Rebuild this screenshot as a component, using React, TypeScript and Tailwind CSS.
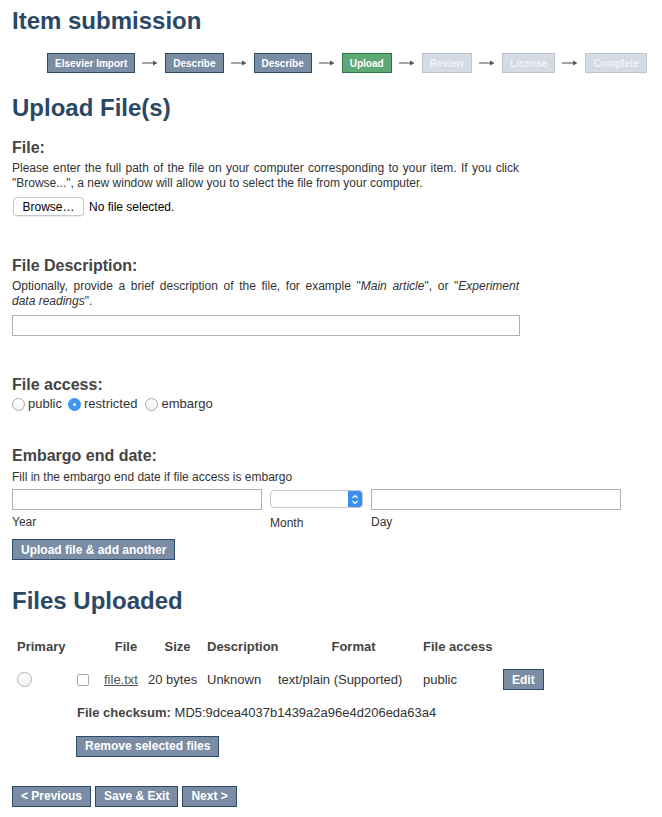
import type { ReactNode } from 'react';

const STEPS: { label: string; state: 'done' | 'current' | 'todo' }[] = [
  { label: 'Elsevier Import', state: 'done' },
  { label: 'Describe', state: 'done' },
  { label: 'Describe', state: 'done' },
  { label: 'Upload', state: 'current' },
  { label: 'Review', state: 'todo' },
  { label: 'License', state: 'todo' },
  { label: 'Complete', state: 'todo' },
];

const stepCls = {
  done: 'border-[#2d4a69] bg-[#7b8da4] text-white',
  current: 'border-[#2b7446] bg-[#5ea878] text-white',
  todo: 'border-[#bcc5d0] bg-[#d5dbe3] text-[#eef1f5]',
};

const btn =
  'border border-[#2d4a69] bg-[#7b8da4] px-[8px] h-[21px] text-[12px] font-bold text-white leading-none whitespace-nowrap';

function Arrow() {
  return (
    <svg width="16" height="8" viewBox="0 0 16 8" className="mx-[7px] shrink-0">
      <path d="M0 4 H12" stroke="#666" strokeWidth="1.2" />
      <path d="M11 1.5 L15.5 4 L11 6.5 Z" fill="#555" />
    </svg>
  );
}

function Radio({ checked }: { checked?: boolean }) {
  if (checked)
    return (
      <span className="inline-flex h-[13px] w-[13px] items-center justify-center rounded-full bg-[#3c97f5]">
        <span className="h-[3px] w-[3px] rounded-full bg-white" />
      </span>
    );
  return (
    <span className="inline-block h-[13px] w-[13px] rounded-full border border-[#a9a9a9] bg-gradient-to-b from-white to-[#f3f3f3]" />
  );
}

function Heading({ children }: { children: ReactNode }) {
  return <h2 className="text-[16px] font-bold leading-[20px] text-[#444]">{children}</h2>;
}

function Help({ children }: { children: ReactNode }) {
  return (
    <p className="w-[507px] text-justify text-[12px] leading-[15px] text-[#333]">{children}</p>
  );
}

export default function App() {
  return (
    <div
      className="min-h-[817px] bg-white px-3 pt-[7px] text-[#333]"
      style={{ fontFamily: '"Liberation Sans", Arial, sans-serif' }}
    >
      <h1 className="text-[24px] font-bold leading-[28px] text-[#2a4866]">Item submission</h1>

      <div className="mt-[18px] flex items-center whitespace-nowrap pl-[35px]">
        {STEPS.map((s, i) => (
          <div key={i} className="flex shrink-0 items-center">
            {i > 0 && <Arrow />}
            <span
              className={`flex h-[20px] items-center border px-[7px] text-[10px] font-bold ${stepCls[s.state]}`}
            >
              {s.label}
            </span>
          </div>
        ))}
      </div>

      <h1 className="mt-[21px] text-[24px] font-bold leading-[28px] text-[#2a4866]">
        Upload File(s)
      </h1>

      <div className="mt-[16px]">
        <Heading>File:</Heading>
        <div className="mt-[3px]">
          <Help>
            Please enter the full path of the file on your computer corresponding to your item. If you
            click "Browse...", a new window will allow you to select the file from your computer.
          </Help>
        </div>
        <div className="mt-[6px] flex items-center gap-[5px] pl-px">
          <span className="flex h-[19px] w-[71px] items-center justify-center rounded-[4px] border border-[#c8c8c8] bg-white text-[12px] text-black shadow-[0_1px_1px_rgba(0,0,0,0.08)]">
            Browse…
          </span>
          <span className="text-[12px] text-black">No file selected.</span>
        </div>
      </div>

      <div className="mt-[40px]">
        <Heading>File Description:</Heading>
        <div className="mt-[3px]">
          <Help>
            Optionally, provide a brief description of the file, for example "<i>Main article</i>", or
            "<i>Experiment</i> <i className="whitespace-nowrap">data readings</i>".
          </Help>
        </div>
        <div className="mt-[6px] h-[21px] w-[508px] border border-[#b0b0b0] bg-white" />
      </div>

      <div className="mt-[39px]">
        <Heading>File access:</Heading>
        <div className="flex items-center text-[13px] leading-[18px] text-[#333]">
          <Radio />
          <span className="ml-[3px]">public</span>
          <span className="ml-[6px]" />
          <Radio checked />
          <span className="ml-[3px]">restricted</span>
          <span className="ml-[8px]" />
          <Radio />
          <span className="ml-[3px]">embargo</span>
        </div>
      </div>

      <div className="mt-[33px]">
        <Heading>Embargo end date:</Heading>
        <p className="mt-[4px] text-[12px] leading-[15px]">
          Fill in the embargo end date if file access is embargo
        </p>
        <div className="mt-[4px] flex items-start gap-[8px]">
          <div className="flex flex-col">
            <div className="h-[21px] w-[250px] border border-[#b0b0b0] bg-white" />
            <span className="mt-[3px] text-[12px]">Year</span>
          </div>
          <div className="flex flex-col">
            <div className="mt-px flex h-[18px] w-[93px] overflow-hidden rounded-[4px] border border-[#c8c8c8] bg-white">
              <div className="flex-1" />
              <div className="flex w-[14px] items-center justify-center bg-[#3c8ff2]">
                <svg width="8" height="11" viewBox="0 0 8 11" fill="none" stroke="white" strokeWidth="1.2">
                  <path d="M1.5 4 L4 1.5 L6.5 4" />
                  <path d="M1.5 7 L4 9.5 L6.5 7" />
                </svg>
              </div>
            </div>
            <span className="mt-[6px] text-[12px]">Month</span>
          </div>
          <div className="flex flex-col">
            <div className="h-[21px] w-[250px] border border-[#b0b0b0] bg-white" />
            <span className="mt-[3px] text-[12px]">Day</span>
          </div>
        </div>
        <button className={`${btn} mt-[7px]`}>Upload file &amp; add another</button>
      </div>

      <h1 className="mt-[26px] text-[24px] font-bold leading-[28px] text-[#2a4866]">
        Files Uploaded
      </h1>

      <div className="ml-[5px] mt-[22px] grid grid-cols-[60px_27px_44px_59px_71px_145px_80px_auto] items-center text-[13px] text-[#333]">
        <span className="font-bold text-[#444]">Primary</span>
        <span />
        <span className="text-center font-bold text-[#444]">File</span>
        <span className="text-center font-bold text-[#444]">Size</span>
        <span className="font-bold text-[#444]">Description</span>
        <span className="pl-[6px] text-center font-bold text-[#444]">Format</span>
        <span className="font-bold text-[#444]">File access</span>
        <span />

        <div className="mt-[13px] flex">
          <span className="h-[15px] w-[15px] rounded-full border border-[#b0b0b0] bg-gradient-to-b from-white to-[#f3f3f3]" />
        </div>
        <div className="mt-[13px] flex">
          <span className="h-[12px] w-[12px] rounded-[2px] border border-[#a9a9a9] bg-white" />
        </div>
        <a className="mt-[13px] text-[#555] underline">file.txt</a>
        <span className="mt-[13px]">20 bytes</span>
        <span className="mt-[13px]">Unknown</span>
        <span className="mt-[13px]">text/plain (Supported)</span>
        <span className="mt-[13px]">public</span>
        <div className="mt-[13px]">
          <button className={btn}>Edit</button>
        </div>

        <div className="col-start-2 col-span-7 mt-[13px]">
          <b className="text-[#444]">File checksum:</b> MD5:9dcea4037b1439a2a96e4d206eda63a4
        </div>
        <div className="col-start-2 col-span-7 -ml-px mt-[13px]">
          <button className={btn}>Remove selected files</button>
        </div>
      </div>

      <div className="mt-[29px] flex gap-[4px]">
        <button className={btn}>&lt; Previous</button>
        <button className={btn}>Save &amp; Exit</button>
        <button className={btn}>Next &gt;</button>
      </div>
    </div>
  );
}
